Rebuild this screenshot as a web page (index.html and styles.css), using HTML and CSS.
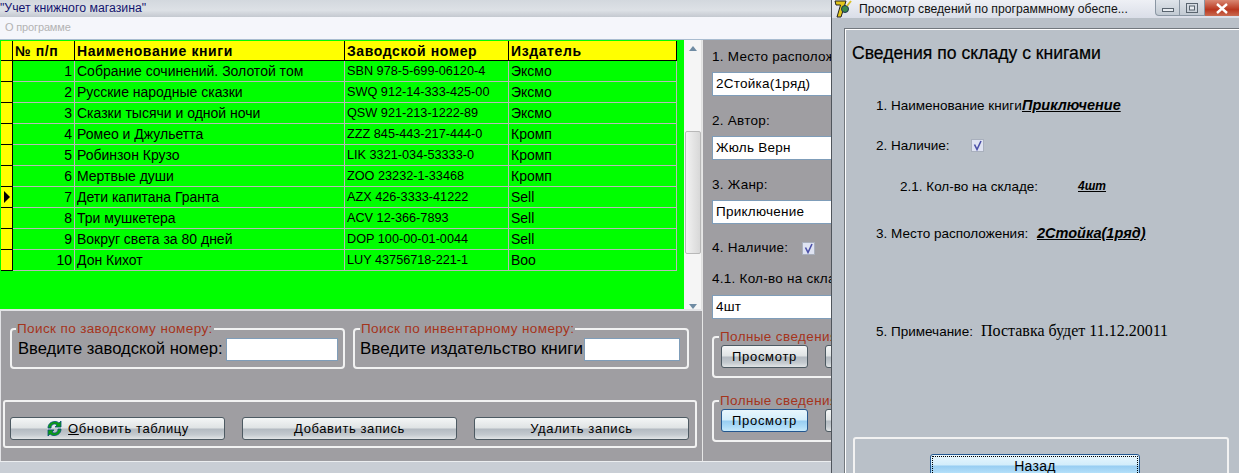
FILE: index.html
```html
<!DOCTYPE html>
<html lang="ru">
<head>
<meta charset="utf-8">
<title>Учет книжного магазина</title>
<link rel="stylesheet" href="styles.css">
</head>
<body>
<div class="desktop">
  <div class="main">
    <div class="titlebar">"Учет книжного магазина"</div>
    <div class="menubar">О программе</div>
    <div class="content">
      <div class="left">
        <div class="gridwrap">
          <div class="grid">
            <table class="books">
              <colgroup><col class="c0"><col class="c1"><col class="c2"><col class="c3"><col class="c4"></colgroup>
              <thead><tr><th class="ind"></th><th>№ п/п</th><th>Наименование книги</th><th>Заводской номер</th><th>Издатель</th></tr></thead>
              <tbody>
                <tr><td class="ind"></td><td class="num">1</td><td>Собрание сочинений. Золотой том</td><td class="code">SBN 978-5-699-06120-4</td><td>Эксмо</td></tr>
                <tr><td class="ind"></td><td class="num">2</td><td>Русские народные сказки</td><td class="code">SWQ 912-14-333-425-00</td><td>Эксмо</td></tr>
                <tr><td class="ind"></td><td class="num">3</td><td>Сказки тысячи и одной ночи</td><td class="code">QSW 921-213-1222-89</td><td>Эксмо</td></tr>
                <tr><td class="ind"></td><td class="num">4</td><td>Ромео и Джульетта</td><td class="code">ZZZ 845-443-217-444-0</td><td>Кромп</td></tr>
                <tr><td class="ind"></td><td class="num">5</td><td>Робинзон Крузо</td><td class="code">LIK 3321-034-53333-0</td><td>Кромп</td></tr>
                <tr><td class="ind"></td><td class="num">6</td><td>Мертвые души</td><td class="code">ZOO 23232-1-33468</td><td>Кромп</td></tr>
                <tr><td class="ind cur"></td><td class="num">7</td><td>Дети капитана Гранта</td><td class="code">AZX 426-3333-41222</td><td>Sell</td></tr>
                <tr><td class="ind"></td><td class="num">8</td><td>Три мушкетера</td><td class="code">ACV 12-366-7893</td><td>Sell</td></tr>
                <tr><td class="ind"></td><td class="num">9</td><td>Вокруг света за 80 дней</td><td class="code">DOP 100-00-01-0044</td><td>Sell</td></tr>
                <tr><td class="ind"></td><td class="num">10</td><td>Дон Кихот</td><td class="code">LUY 43756718-221-1</td><td>Boo</td></tr>
              </tbody>
            </table>
          </div>
          <div class="scrollbar">
            <svg class="arrow" width="8" height="5" viewBox="0 0 8 5"><path d="M0 5 4 0l4 5z" fill="#6f8ba3"/></svg>
            <div class="thumb"></div>
            <svg class="arrow" width="8" height="5" viewBox="0 0 8 5"><path d="M0 0l4 5 4-5z" fill="#6f8ba3"/></svg>
          </div>
        </div>
        <div class="lower">
          <div class="searches">
            <fieldset class="group search s1">
              <legend>Поиск по заводскому номеру:</legend>
              <span class="big">Введите заводской номер:</span><span class="inp w1"></span>
            </fieldset>
            <fieldset class="group search s2">
              <legend>Поиск по инвентарному номеру:</legend>
              <span class="big">Введите издательство книги</span><span class="inp w2"></span>
            </fieldset>
          </div>
          <div class="actions">
            <button class="btn act">
              <svg width="17" height="17" viewBox="0 0 17 17"><path d="M2 8C2 4 5 1.500 9 1.500c2 0 3 .7 4 1.500l2-2v6h-6l2-2c-.8-.7-1.500-1-2.400-1C6.500 4 5 5.500 5 8z" fill="#0c9c12" stroke="#064b7c" stroke-width=".8"/><path d="M15 9c0 4-3 6.500-7 6.500-2 0-3-.7-4-1.500l-2 2v-6h6l-2 2c.8.700 1.500 1 2.400 1 2.100 0 3.600-1.500 3.600-4z" fill="#0c9c12" stroke="#064b7c" stroke-width=".8"/></svg>
              <span><u>О</u>бновить таблицу</span>
            </button>
            <button class="btn act">Добавить запись</button>
            <button class="btn act">Удалить запись</button>
          </div>
        </div>
      </div>
      <div class="right">
        <label class="rlabel first">1. Место расположения:</label>
        <div class="rinput">2Стойка(1ряд)</div>
        <label class="rlabel">2. Автор:</label>
        <div class="rinput">Жюль Верн</div>
        <label class="rlabel">3. Жанр:</label>
        <div class="rinput">Приключение</div>
        <div class="rlabel check">4. Наличие:
          <svg class="cb" width="13" height="13" viewBox="0 0 13 13"><rect x=".5" y=".5" width="12" height="12" fill="#dfe3f2" stroke="#a9b0bd"/><path d="M3.500 5.500 6 10.500 10 2" fill="none" stroke="#4a4fa8" stroke-width="1.600"/></svg>
        </div>
        <label class="rlabel">4.1. Кол-во на складе:</label>
        <div class="rinput short">4шт</div>
        <fieldset class="group rgroup">
          <legend>Полные сведения</legend>
          <div class="rbtns"><button class="btn view">Просмотр</button><button class="btn view">Изменить</button></div>
        </fieldset>
        <fieldset class="group rgroup second">
          <legend>Полные сведения</legend>
          <div class="rbtns"><button class="btn view hot">Просмотр</button><button class="btn view">Изменить</button></div>
        </fieldset>
      </div>
    </div>
    <div class="status"></div>
  </div>

  <div class="dialog">
    <div class="dtitle">
      <svg class="appicon" width="18" height="18" viewBox="0 0 18 18"><path d="M1 1h11l-5 16H3L6.500 5H2z" fill="#e3c61a" stroke="#222" stroke-width="1"/><circle cx="11" cy="9" r="3.500" fill="#3b8a4a" stroke="#1c2f4f"/><path d="M13 6 17 1" stroke="#d8c02a" stroke-width="2"/></svg>
      <span class="dtext">Просмотр сведений по программному обеспе...</span>
      <div class="wctl">
        <span class="wb"><svg width="12" height="8" viewBox="0 0 12 8"><rect x=".5" y="4.500" width="11" height="3" fill="#e8ecf1" stroke="#59646f"/></svg></span>
        <span class="wb"><svg width="12" height="10" viewBox="0 0 12 10"><rect x=".5" y=".5" width="11" height="9" fill="none" stroke="#59646f"/><rect x="3.500" y="3" width="5" height="4" fill="#e8ecf1" stroke="#59646f"/></svg></span>
        <span class="wb close"><svg width="14" height="11" viewBox="0 0 14 11"><path d="M2 1l10 9M12 1 2 10" stroke="#fff" stroke-width="2.400"/></svg></span>
      </div>
    </div>
    <div class="dbody">
      <div class="dframe">
        <h1 class="dhead">Сведения по складу с книгами</h1>
        <div class="drow r1"><span class="dl l1">1. Наименование книги</span><span class="dv">Приключение</span></div>
        <div class="drow r2"><span class="dl">2. Наличие:</span>
          <svg class="cb" width="13" height="13" viewBox="0 0 13 13"><rect x=".5" y=".5" width="12" height="12" fill="#dfe3f2" stroke="#a9b0bd"/><path d="M3.500 5.500 6 10.500 10 2" fill="none" stroke="#4a4fa8" stroke-width="1.600"/></svg>
        </div>
        <div class="drow r3"><span class="dl l3">2.1. Кол-во на складе:</span><span class="dv small">4шт</span></div>
        <div class="drow r4"><span class="dl l4">3. Место расположения:</span><span class="dv">2Стойка(1ряд)</span></div>
        <div class="drow r5"><span class="dl l5">5. Примечание:</span><span class="note">Поставка будет 11.12.20011</span></div>
        <div class="dgroup"><button class="btn back hot">Назад</button></div>
      </div>
    </div>
  </div>
</div>
</body>
</html>
```

FILE: styles.css
```css
* { box-sizing: border-box; }
html, body { margin: 0; padding: 0; }
body { font-family: "Liberation Sans", Arial, sans-serif; font-size: 13px; color: #000; overflow: hidden; }
.desktop { position: relative; width: 1239px; height: 473px; overflow: hidden; background: #c9ced5; }

.main { display: flex; flex-direction: column; width: 1239px; height: 473px; }
.titlebar { height: 17px; font-size: 12.300px; line-height: 17px; color: #14146e; background: linear-gradient(#d3d8de, #dde1e6 60%, #c4c9d0); }
.menubar { height: 23px; padding-left: 5px; line-height: 20px; font-size: 11px; letter-spacing: -.15px; color: #b3b3b3; background: #f5f6fb; border-bottom: 1px solid #a9bcd0; }
.content { flex: 0 0 421px; display: flex; background: #9f9ea2; }
.left { width: 703px; display: flex; flex-direction: column; border-right: 1px solid #e6e6e6; }
.gridwrap { height: 271px; display: flex; border-bottom: 2px solid #e3e3e6; }
.grid { width: 685px; background: #00ff00; padding-left: 1px; padding-top: 1px; }
.books { border-collapse: separate; border-spacing: 0; table-layout: fixed; width: 676px; font-size: 14px; }
.c0 { width: 12px; } .c1 { width: 62px; } .c2 { width: 270px; } .c3 { width: 164px; } .c4 { width: 168px; }
.books th { height: 20px; padding: 0 0 0 2px; background: #ffff00; font-weight: 700; font-size: 14px; letter-spacing: .6px; text-align: left; border-right: 1px solid #000; border-bottom: 1px solid #000; white-space: nowrap; overflow: hidden; }
.books td { height: 21px; padding: 0 0 0 2px; border-right: 1px solid #b9b9b9; border-bottom: 1px solid #b9b9b9; white-space: nowrap; overflow: hidden; }
.books td.num { text-align: right; padding: 0 2px 0 0; }
.books td.code { font-size: 12.700px; }
.books td.ind { background: #ffff00; border-right: 1px solid #000; border-bottom: 1px solid #000; padding: 0; position: relative; }
.books td.cur::after { content: ""; position: absolute; left: 3px; top: 4px; border-left: 6px solid #000; border-top: 6px solid transparent; border-bottom: 6px solid transparent; }

.scrollbar { width: 18px; display: flex; flex-direction: column; align-items: center; background: #f5f5f5; padding-top: 6px; border-right: 1px solid #e0e0e0; }
.arrow { flex: none; }
.thumb { width: 16px; height: 124px; margin-top: 80px; margin-bottom: 50px; background: linear-gradient(90deg, #f2f2f2, #d8d8d8); border: 1px solid #b8b8b8; border-radius: 2px; }

.lower { flex: 1; display: flex; flex-direction: column; padding: 0 6px 0 2px; border-left: 1px solid #e3e3e6; }
.searches { display: flex; gap: 8px; padding: 11px 0 0 7px; height: 89px; }
.group { margin: 0; border: 2px solid #f2f2f2; border-radius: 4px; min-width: 0; }
.group legend { padding: 0 1px; margin-left: 5px; font-size: 13.500px; line-height: 13px; color: #a5341c; white-space: nowrap; letter-spacing: .38px; }
.search { height: 47px; display: flex; padding: 3px 0 0; line-height: 22px; white-space: nowrap; }
.search.s1 { width: 335px; }
.search.s1 legend { margin-left: 4px; }
.search.s2 { width: 336px; }
.big { font-size: 16.600px; margin-left: 6px; }
.s2 .big { font-size: 17px; margin-left: 5px; }
.inp { display: inline-block; vertical-align: top; height: 23px; background: #fff; border: 1px solid #7f9db9; }
.w1 { width: 112px; margin-left: 3px; }
.w2 { width: 96px; margin-left: 1px; }
.actions { width: 694px; height: 48px; border: 2px solid #f2f2f2; border-radius: 3px; display: flex; justify-content: space-between; padding: 15px 6px 0 5px; }
.btn { display: flex; align-items: center; justify-content: center; gap: 5px; font-family: inherit; font-size: 13px; color: #000; padding: 0; border: 1px solid #4d5a62; border-radius: 3px; background: linear-gradient(#f4f6f6, #dfe3e4 48%, #b3bac1 52%, #c4cacf 80%, #e2e5e6); }
.btn.hot { border-color: #24578f; background: linear-gradient(#e8f6fd, #d2edfb 48%, #97cdf2 52%, #aedcf8 80%, #c5e9fb); }
.act { width: 215px; height: 23px; letter-spacing: .6px; }

.right { width: 128px; overflow: hidden; padding: 4px 0 0 9px; }
.rlabel { display: block; height: 19px; font-size: 13.500px; line-height: 20px; white-space: nowrap; letter-spacing: .25px; }
.rlabel.first { margin-top: 3px; }
.rinput { width: 160px; height: 24px; margin: 6px 0 15px; padding-left: 3px; background: #fff; border: 1px solid #7f9db9; font-size: 13.500px; line-height: 22px; letter-spacing: .25px; white-space: nowrap; }
.rlabel.check { display: flex; align-items: center; height: 18px; margin-top: 1px; margin-bottom: 12px; }
.rlabel.check .cb { margin-left: 14px; }
.rinput.short { margin: 7px 0 0; }
.rgroup { width: 170px; height: 48px; margin: 11px 0 0; padding: 0; }
.rgroup.second { margin-top: 16px; }
.rbtns { display: flex; gap: 17px; padding: 2px 0 0 7px; }
.view { flex: none; width: 87px; height: 23px; letter-spacing: .7px; }
.status { flex: 1; background: #c9ced5; border-top: 1px solid #eceef0; }

.dialog { position: absolute; left: 831px; top: 0; width: 408px; height: 473px; display: flex; flex-direction: column; background: #b9c0c8; border-left: 1px solid #4f555c; }
.dtitle { height: 22px; display: flex; align-items: center; padding-left: 2px; background: linear-gradient(#eef0f5, #dadee8); font-size: 12.200px; white-space: nowrap; }
.appicon { flex: none; }
.dtext { margin-left: 7px; color: #111; }
.wctl { margin-left: auto; display: flex; align-self: flex-start; height: 16px; }
.wb { width: 25px; height: 16px; display: flex; align-items: center; justify-content: center; border: 1px solid #8a96a3; border-top: 0; border-left-width: 0; background: linear-gradient(#dfe4ea, #c2cad3); }
.wb:first-child { border-left-width: 1px; border-radius: 0 0 0 4px; }
.wb.close { width: 34px; border: 0; background: linear-gradient(#d98873, #b9371f 60%, #c96a50); }
.dbody { flex: 1; padding: 10px 0 0 12px; }
.dframe { height: 460px; border-left: 1px solid #72787e; border-top: 1px solid #72787e; box-shadow: inset 1px 1px 0 #fff; padding: 13px 0 0 7px; position: relative; }
.dhead { margin: 0; font-size: 17.600px; font-weight: 400; line-height: 22px; -webkit-text-stroke: .2px #000; }
.drow { display: flex; align-items: center; height: 18px; white-space: nowrap; font-size: 13.500px; }
.dl { display: inline-block; }
.r1 { margin: 32px 0 0 24px; }
.r2 { margin: 22px 0 0 24px; }
.r3 { margin: 23px 0 0 48px; }
.r4 { margin: 29px 0 0 24px; }
.r5 { margin: 80px 0 0 24px; }
.l1 { width: 146px; }
.l3 { width: 178px; }
.l4 { width: 161px; }
.l5 { width: 105px; }
.r2 .cb { margin-left: 21px; }
.dv { font-weight: 700; font-style: italic; text-decoration: underline; font-size: 14.500px; }
.dv.small { font-size: 12px; }
.note { font-family: "Liberation Serif", "Times New Roman", serif; font-size: 16px; }
.dgroup { position: absolute; left: 8px; top: 408px; width: 376px; height: 60px; border: 2px solid #f2f2f2; border-radius: 3px; padding: 15px 0 0 75px; }
.back { width: 210px; height: 23px; font-size: 14px; letter-spacing: .3px; outline: 1px dotted #000; outline-offset: -3px; }
```
